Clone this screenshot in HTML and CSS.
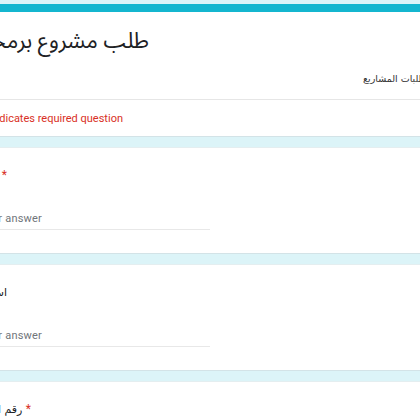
FILE: index.html
```html
<!DOCTYPE html>
<html lang="ar">
<head>
<meta charset="utf-8">
<title>طلب مشروع برمجة</title>
<link rel="stylesheet" href="styles.css">
</head>
<body>
<main class="form">
  <section class="card header-card">
    <div class="head-main">
      <div class="title-box"><h1 class="title" dir="rtl">طلب مشروع برمجة</h1></div>
      <div class="desc-row"><p class="desc">استمارة طلبات المشاريع</p></div>
    </div>
    <div class="required-row">
      <div class="required-box"><span class="required">* Indicates required question</span></div>
    </div>
  </section>

  <section class="card question">
    <div class="q-label-box w6"><span class="q-label"><span dir="rtl">الاسم</span> <span class="star">*</span></span></div>
    <div class="answer-box"><span class="answer">Your answer</span></div>
  </section>

  <section class="card question">
    <div class="q-label-box w7"><span class="q-label" dir="rtl">اسم الشركة</span></div>
    <div class="answer-box"><span class="answer">Your answer</span></div>
  </section>

  <section class="card question">
    <div class="q-label-box w31"><span class="q-label"><span dir="rtl">رقم الهاتف</span> <span class="star">*</span></span></div>
  </section>
</main>
</body>
</html>
```

FILE: styles.css
```css
html, body {
  margin: 0;
  padding: 0;
}
body {
  background: #dcf4f8;
  overflow: hidden;
  width: 420px;
  height: 420px;
  font-family: Roboto, "Liberation Sans", sans-serif;
}
.form {
  display: flex;
  flex-direction: column;
  gap: 10px;
  padding-top: 4px;
}
.card {
  background: #ffffff;
  border-top: 1px solid #e4eef0;
  border-bottom: 1px solid #d3e3e7;
}
.header-card {
  border-top: 8px solid #14b6cf;
}
.head-main {
  height: 87px;
  border-bottom: 1px solid #e6e6e6;
  display: flex;
  flex-direction: column;
}
.title-box {
  width: 149px;
  display: flex;
  justify-content: flex-end;
  padding-top: 14px;
}
.title {
  margin: 0;
  white-space: nowrap;
  font-family: "Noto Sans Arabic", "Noto Naskh Arabic", "DejaVu Sans Condensed", "DejaVu Sans", sans-serif;
  font-weight: normal;
  font-size: 22px;
  line-height: 30px;
  color: #202124;
}
.desc-row {
  padding-left: 363px;
  padding-top: 16px;
}
.desc {
  margin: 0;
  white-space: nowrap;
  font-family: "DejaVu Sans", sans-serif;
  font-size: 9.5px;
  line-height: 14px;
  color: #333333;
}
.required-row {
  height: 36px;
  display: flex;
  align-items: center;
}
.required-box {
  width: 123px;
  display: flex;
  justify-content: flex-end;
}
.required {
  white-space: nowrap;
  font-size: 11px;
  color: #d93025;
}
.question {
  height: 88px;
  padding-top: 17px;
}
.q-label-box {
  display: flex;
  justify-content: flex-end;
  height: 20px;
  align-items: center;
}
.w6 { width: 7px; }
.w7 { width: 7px; }
.w31 { width: 31px; }
.q-label {
  white-space: nowrap;
  font-family: "DejaVu Sans", sans-serif;
  font-size: 11px;
  color: #202124;
}
.star {
  color: #d93025;
  font-family: Roboto, sans-serif;
  font-size: 12px;
}
.answer-box {
  margin-top: 26px;
  height: 19px;
  border-bottom: 1px solid #e8e8e8;
  display: flex;
  justify-content: flex-end;
  align-items: flex-start;
  padding-right: 168px;
  box-sizing: border-box;
  width: 210px;
}
.answer {
  white-space: nowrap;
  font-size: 11px;
  line-height: 16px;
  color: #70757a;
  letter-spacing: 0.2px;
}
```
